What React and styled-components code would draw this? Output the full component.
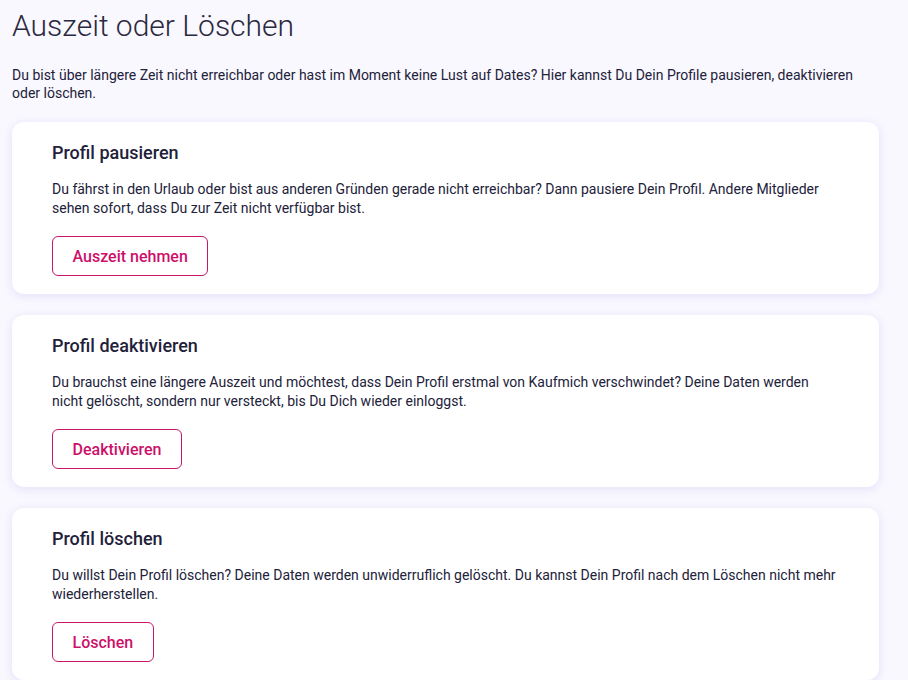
import React from "react";
import styled, { createGlobalStyle } from "styled-components";

const Global = createGlobalStyle`
  html, body { margin: 0; padding: 0; background: #f9f8fe; }
  body { font-family: Roboto, "Noto Sans", sans-serif; color: #22213a; }
`;

const Page = styled.main`
  padding: 6px 29px 20px 12px;
  display: flex;
  flex-direction: column;
`;

const Title = styled.h1`
  margin: 0;
  font-size: 30px;
  font-weight: 300;
  line-height: 40px;
  color: #2a2940;
`;

const Intro = styled.p`
  margin: 20px 0 20px;
  font-size: 14px;
  line-height: 18px;
  color: #22213a;
`;

const List = styled.div`
  display: flex;
  flex-direction: column;
  gap: 21px;
`;

const Card = styled.section`
  background: #ffffff;
  border-radius: 12px;
  box-shadow: 0 2px 10px rgba(200, 195, 245, 0.45);
  padding: 19px 40px 18px;
  display: flex;
  flex-direction: column;
  align-items: flex-start;
`;

const CardTitle = styled.h2`
  margin: 0;
  font-size: 18px;
  font-weight: 500;
  line-height: 24px;
  color: #22213a;
`;

const CardText = styled.p`
  margin: 15px 0 18px;
  font-size: 14px;
  line-height: 19px;
  color: #22213a;
`;

const OutlineButton = styled.button`
  height: 40px;
  padding: 0 19.5px;
  border: 1px solid #c8176b;
  border-radius: 6px;
  background: #fff;
  color: #cc106a;
  font-family: Roboto, "Noto Sans", sans-serif;
  font-size: 16px;
  font-weight: 500;
  cursor: pointer;
`;

const sections = [
  {
    title: "Profil pausieren",
    text: "Du fährst in den Urlaub oder bist aus anderen Gründen gerade nicht erreichbar? Dann pausiere Dein Profil. Andere Mitglieder sehen sofort, dass Du zur Zeit nicht verfügbar bist.",
    button: "Auszeit nehmen",
  },
  {
    title: "Profil deaktivieren",
    text: "Du brauchst eine längere Auszeit und möchtest, dass Dein Profil erstmal von Kaufmich verschwindet? Deine Daten werden nicht gelöscht, sondern nur versteckt, bis Du Dich wieder einloggst.",
    button: "Deaktivieren",
  },
  {
    title: "Profil löschen",
    text: "Du willst Dein Profil löschen? Deine Daten werden unwiderruflich gelöscht. Du kannst Dein Profil nach dem Löschen nicht mehr wiederherstellen.",
    button: "Löschen",
  },
];

export default function App() {
  return (
    <>
      <Global />
      <Page>
        <Title>Auszeit oder Löschen</Title>
        <Intro>
          Du bist über längere Zeit nicht erreichbar oder hast im Moment keine Lust auf Dates? Hier kannst Du Dein Profile pausieren, deaktivieren oder löschen.
        </Intro>
        <List>
          {sections.map((s) => (
            <Card key={s.title}>
              <CardTitle>{s.title}</CardTitle>
              <CardText>{s.text}</CardText>
              <OutlineButton>{s.button}</OutlineButton>
            </Card>
          ))}
        </List>
      </Page>
    </>
  );
}
